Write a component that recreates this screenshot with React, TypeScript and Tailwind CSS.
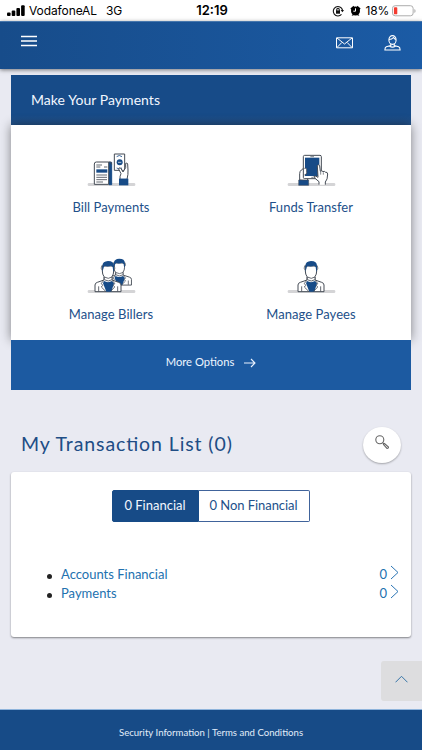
import React from "react";

const Ground: React.FC = () => (
  <rect x="2" y="93" width="143" height="9" rx="4" fill="#d4d4d6" stroke="none" />
);

const BillIcon: React.FC = () => (
  <svg viewBox="0 0 147 108" className="w-[49px] h-9" fill="none" stroke="#444b55" strokeWidth="3">
    <Ground />
    <path d="M66 31h8v67h-8z" fill="#174b87" stroke="#174b87" />
    <path d="M22 36q0-6 6-6h37v67H22z" fill="#fff" />
    <path d="M65 30h5q4 0 4 7" />
    <path d="M28 39h17M28 45h12M51 45h10M28 69h32M28 76h32M28 83h32M28 90h20" strokeWidth="2.5" />
    <path d="M28 52h33v10H28z" fill="#174b87" stroke="none" />
    <path d="M82 6h31v49H82z" fill="#fff" />
    <path d="M89 14q8-7 16 0M89 48q8 6 16 0" stroke="#174b87" strokeWidth="2.5" />
    <circle cx="98" cy="31" r="9" fill="#174b87" stroke="none" />
    <path d="M93 31h10" stroke="#fff" strokeWidth="2" />
    <path
      d="M99 82q-1-10 3-17l-7-14q0-5 6-3l7 12 8-13V34q4-3 6 2l1 18q1 13-3 28"
      fill="#fff"
    />
    <path d="M96 80h28v20H96z" fill="#174b87" stroke="none" />
    <path d="M98 82h24" stroke="#174b87" />
  </svg>
);

const TransferIcon: React.FC = () => (
  <svg viewBox="0 0 147 108" className="w-[49px] h-9" fill="none" stroke="#444b55" strokeWidth="3">
    <Ground />
    <path d="M38 84V65q0-7 5-11l8-6v28l11 2v8z" fill="#fff" />
    <rect x="49" y="10" width="54" height="70" rx="4" fill="#fff" />
    <path d="M54 17h43v55H54z" fill="#174b87" stroke="none" />
    <path d="M70 14h11M73 76h7" strokeWidth="2" />
    <path d="M52 49q6-3 7 4v9q0 6-7 7" fill="#fff" strokeWidth="2.5" />
    <path
      d="M96 98v-9q-14-10-15-16 5-3 12 3l-2-35q3-5 7 0l2 17q5-4 8 1 4-3 8 2 5-2 6 5 0 17-7 24v8"
      fill="#fff"
    />
    <path d="M101 59v9M109 61v7" strokeWidth="2" />
    <path d="M35 84h30v16H35z" fill="#174b87" stroke="#444b55" strokeWidth="1.5" />
  </svg>
);

// head and jacket, shared by the payee and billers icons
const Person: React.FC = () => (
  <g>
    <path
      d="M33 98V78q0-6 7-8l20-7V53q-5-7-5-17V21h34v15q0 10-5 17v10l20 7q7 2 7 8v20z"
      fill="#fff"
    />
    <path d="M60 66q12 7 24 0l6 7-8 25H67l-10-25z" fill="#174b87" stroke="none" />
    <path d="M59 65l-7 8 4 6-4 5 14 14M85 65l7 8-4 6 4 5-13 14M44 82v15M101 82v15" strokeWidth="2.5" />
    <path d="M61 54q12 8 23 0v8q-11 8-23 0z" fill="#fff" strokeWidth="2.5" />
    <path d="M55 38V20q1-13 17-14 18 0 18 15v17q-4-5-4-14l-5-4q-9 4-19 1-4 5-4 9z" fill="#174b87" stroke="none" />
    <path d="M55 33q-5-2-3-9l3-6M89 33q5-2 3-9l-2-5" strokeWidth="2" />
  </g>
);

const PayeeIcon: React.FC = () => (
  <svg viewBox="0 0 147 108" className="w-[49px] h-9" fill="none" stroke="#444b55" strokeWidth="3">
    <Ground />
    <Person />
  </svg>
);

const BillersIcon: React.FC = () => (
  <svg viewBox="0 0 147 108" className="w-[49px] h-9 overflow-visible" fill="none" stroke="#444b55" strokeWidth="3">
    <Ground />
    <g transform="translate(29 -6) scale(.94 .86)">
      <Person />
    </g>
    <g transform="translate(-9 0)">
      <Person />
    </g>
  </svg>
);

const payments = [
  { label: "Bill Payments", icon: BillIcon },
  { label: "Funds Transfer", icon: TransferIcon },
  { label: "Manage Billers", icon: BillersIcon },
  { label: "Manage Payees", icon: PayeeIcon },
];

const StatusBar: React.FC = () => (
  <div className="h-[21px] bg-white flex items-center text-black font-['Inter',sans-serif] text-[12px] leading-[21px]">
    <div className="flex-1 flex items-center pl-[7px]">
      <svg viewBox="0 0 18 12" className="w-[18px] h-3">
        <rect x="0" y="7.5" width="3.6" height="3.5" rx="1" />
        <rect x="4.7" y="5.5" width="3.6" height="5.5" rx="1" />
        <rect x="9.4" y="3" width="3.6" height="8" rx="1" />
        <rect x="14.1" y="0.3" width="3.6" height="10.7" rx="1" />
      </svg>
      <span className="ml-1 w-[77px] whitespace-nowrap tracking-[-0.1px]">VodafoneAL</span>
      <span className="tracking-[-0.2px]">3G</span>
    </div>
    <span className="font-semibold text-[13px]">12:19</span>
    <div className="flex-1 flex items-center justify-end pr-[5px]">
      <svg viewBox="0 0 12 12" className="w-3 h-3 mr-1.5" fill="none" stroke="#111" strokeWidth="1.1">
        <path d="M9.5 9.4A4.7 4.7 0 1 1 10.5 5" />
        <path d="M8.7 5h3.3l-1.6 2.3z" fill="#111" stroke="none" />
        <path d="M4 5.5h4V8.7H4z" fill="#111" stroke="none" />
        <path d="M4.8 6V4.5a1.2 1.2 0 0 1 2.4 0V6" />
      </svg>
      <svg viewBox="0 0 12 12" className="w-3 h-3 mr-1">
        <circle cx="5.5" cy="6" r="4.5" />
        <path d="M.4 3.6 3.5.8l.8 1.4L1.5 5zM10.6 3.6 7.5.8l-.8 1.4L9.5 5zM1.5 11l1.6-2 1 1zM9.5 11 7.9 9l-1 1z" />
        <path d="M5.5 3.3V6.2H3.3" fill="none" stroke="#fff" />
      </svg>
      <span className="tracking-[-0.2px]">18%</span>
      <svg viewBox="0 0 26 12" className="w-[25px] h-3 ml-[3px]">
        <rect x=".5" y=".5" width="21.5" height="10.5" rx="2.8" fill="#fff" stroke="#aaa" />
        <rect x="2" y="2" width="3.5" height="7.5" rx="1" fill="#f33b30" />
        <path d="M23.3 4v4q1.2-.5 1.2-2t-1.2-2" fill="#aaa" />
      </svg>
    </div>
  </div>
);

const Header: React.FC = () => (
  <header className="relative z-10 h-12 flex justify-between bg-linear-to-r from-[#174c8a] to-[#1b5ba5] border-t border-[#4777ad] shadow-[0_1px_4px_rgba(0,0,0,0.5)] text-white">
    <svg viewBox="0 0 16 12" className="w-4 h-3 ml-[21px] mt-[13px]" stroke="#fff" strokeWidth="1.4">
      <path d="M0 1.5h16M0 6h16M0 10.5h16" />
    </svg>
    <div className="flex items-start pr-[21px]">
      <svg viewBox="0 0 17 12" className="w-[17px] h-3 mt-[15px] mr-[31px]" fill="none" stroke="#fff" strokeWidth="1">
        <path d="M.5.8h16v10H.5zM1 1l7.5 6L16 1M1 10.5l4.8-5M16 10.5l-4.8-5" />
      </svg>
      <svg viewBox="0 0 17 16" className="w-[17px] h-4 mt-[13px]" fill="none" stroke="#fff" strokeWidth="1.1">
        <ellipse cx="8.5" cy="5" rx="3.6" ry="4.4" />
        <path d="M5 4.5q3 0 4.5-2 1 1.5 2.4 2M6.8 9v1.5l-4.5 1.2Q.9 12.3.9 15h15.2q0-2.7-1.4-3.3l-4.5-1.2V9M5.5 11q3 2.2 6 0" />
      </svg>
    </div>
  </header>
);

const PaymentsCard: React.FC = () => (
  <section className="mx-[11px] mt-1.5 h-[315px] flex flex-col">
    <h2 className="h-[50px] pl-5 bg-linear-to-b from-[#174b88] from-80% to-[#245289] text-[#f2f7ff] text-[14px] leading-[50px] tracking-[0.05px]">
      Make Your Payments
    </h2>
    <div className="h-[215px] grid grid-cols-2 grid-rows-[107px_108px] bg-white shadow-[0_0_10px_rgba(0,0,0,0.45)]">
      {payments.map(({ label, icon: Icon }) => (
        <div key={label} className="flex flex-col items-center pt-[27px] text-[#22508a]">
          <Icon />
          <span className="mt-2 text-[13px] leading-[22px] tracking-[0.05px] whitespace-nowrap">{label}</span>
        </div>
      ))}
    </div>
    <button className="relative h-[50px] flex items-start justify-center pt-3 bg-[#1c5aa1] text-[#edf5ff] text-[11.2px] leading-5">
      <span>More Options</span>
      <svg viewBox="0 0 12 10" className="w-3 h-2.5 ml-2.5 mt-1.5" fill="none" stroke="#e9f2ff" strokeWidth="1.1">
        <path d="M0 5h11M7 1l4 4-4 4" />
      </svg>
    </button>
  </section>
);

const Chevron: React.FC = () => (
  <svg viewBox="0 0 9 15" className="w-[9px] h-[15px] ml-[3px] mb-1" fill="none" stroke="#2b75b5" strokeWidth="1">
    <path d="M1 1l7 6.5-7 6.5" />
  </svg>
);

const rows = [
  { label: "Accounts Financial", count: 0 },
  { label: "Payments", count: 0 },
];

const TransactionList: React.FC = () => (
  <section className="mx-[11px]">
    <div className="h-[82px] flex items-start justify-between pl-2.5 pr-2.5">
      <h1 className="pt-[38px] text-[19.5px] leading-8 tracking-[0.9px] [font-feature-settings:'liga'_1] text-[#204d85]">
        My Transaction List (0)
      </h1>
      <button className="mt-[37px] w-[38px] h-9 rounded-[50%] bg-white shadow-[0_1px_2px_rgba(0,0,0,0.3)] flex justify-center pt-2">
        <svg viewBox="0 0 14 14" className="w-3.5 h-3.5" fill="none" stroke="#666" strokeWidth="1.1">
          <circle cx="4.8" cy="4.8" r="4" />
          <path d="M7.8 7.8l1.2 1.2M8.5 9.5l1-1 4 3.5q0 1.5-1.5 1.4z" />
        </svg>
      </button>
    </div>
    <div className="h-[165px] rounded-[3px] bg-white shadow-[0_1px_2px_rgba(0,0,0,0.45)] pt-[18px]">
      <div className="flex justify-center text-[13px] leading-7">
        <button className="w-[87px] h-8 -ml-px rounded-l-[2px] border border-[#174b87] bg-[#174b87] text-[#f2f7ff] flex justify-center">
          0 Financial
        </button>
        <button className="w-[111px] h-8 rounded-r-[2px] border border-l-0 border-[#40639b] text-[#22508a] flex justify-center whitespace-nowrap tracking-[-0.05px]">
          0 Non Financial
        </button>
      </div>
      <ul className="pt-[43px] pl-9 pr-3 text-[13px] text-[#2271af]">
        {rows.map((row) => (
          <li key={row.label} className="h-[19px] flex items-center">
            <span className="w-[5px] h-[5px] mt-1 rounded-full bg-[#222]" />
            <span className="ml-[9px] flex-1">{row.label}</span>
            <span>{row.count}</span>
            <Chevron />
          </li>
        ))}
      </ul>
    </div>
  </section>
);

const App: React.FC = () => {
  return (
    <div className="relative w-[422px] h-[750px] overflow-hidden flex flex-col bg-[#e9eaf2] font-['Lato',sans-serif]">
      <StatusBar />
      <Header />
      <PaymentsCard />
      <TransactionList />
      <button className="absolute right-0 top-[661px] w-[41px] h-10 rounded-l-[3px] bg-[#dddddf] flex justify-center pt-3.5">
        <svg viewBox="0 0 13 8" className="w-[13px] h-2" fill="none" stroke="#3675a8" strokeWidth="1">
          <path d="M.5 7.3l6-6 6 6" />
        </svg>
      </button>
      <footer className="mt-auto h-[41px] border-t border-[#8fb4dc] bg-[#174b87] text-[#e2edfa] text-center text-[9.6px] leading-[45px] whitespace-nowrap">
        <a>Security Information</a> | <a>Terms and Conditions</a>
      </footer>
    </div>
  );
};

export default App;
